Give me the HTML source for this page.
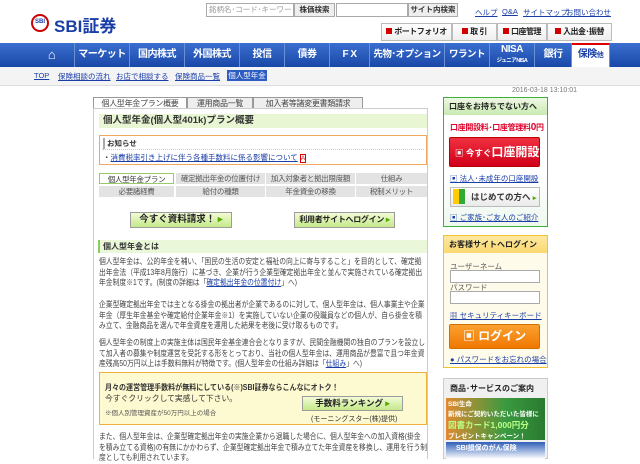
<!DOCTYPE html>
<html><head><meta charset="utf-8"><style>
*{margin:0;padding:0;box-sizing:border-box}
body{width:640px;height:459px;overflow:hidden;background:#fff;font-family:"Liberation Sans","Noto Sans CJK JP",sans-serif;font-size:9px;color:#333;position:relative}
.a{position:absolute;white-space:nowrap}
a,.lk{color:#1a3ea8;text-decoration:underline}
.nav{left:0;top:43px;width:640px;height:24px;background:linear-gradient(#3b6fcf,#1947a8);}
.nav div{position:absolute;top:0;height:24px;color:#fff;font-size:10px;font-weight:bold;text-align:center;line-height:24px;border-right:1px solid #6d8fd6;letter-spacing:-0.5px;overflow:hidden}
.hb{top:23px;height:18px;border:1px solid #bbb;background:linear-gradient(#fff,#eee);font-size:8px;font-weight:bold;line-height:16px;text-align:center;color:#222;letter-spacing:-0.5px}
.hb b{display:inline-block;width:6px;height:6px;background:#d10000;margin-right:2px}
.tab{top:97px;height:12px;border:1px solid #999;border-bottom:none;background:#eee;font-size:8px;text-align:center;line-height:11px;color:#444;letter-spacing:-0.3px}
.st{height:11px;background:#e3e3e3;font-size:7.5px;text-align:center;line-height:11px;color:#555;letter-spacing:-0.3px}
.p{left:99px;width:386px;font-size:8px;line-height:10.6px;color:#444;white-space:normal;transform:scaleX(0.85);transform-origin:0 0}
.gb{background:linear-gradient(#f2fbd6,#c5e98a);border:1px solid #9c9c9c;font-weight:bold;text-align:center;color:#222}
</style></head><body>
<!-- header -->
<div class="a" style="left:31px;top:14px;width:18px;height:18px;border-radius:50%;border:2px solid #c00;font-size:6px;color:#1a3ea8;font-weight:bold;line-height:13px;text-align:center">SBI</div>
<div class="a" style="left:54px;top:12px;font-size:17px;font-weight:bold;color:#1a3ea8">SBI証券</div>
<div class="a" style="left:206px;top:3px;width:88px;height:14px;border:1px solid #aaa;font-size:7.5px;color:#999;line-height:12px;padding-left:2px;overflow:hidden">銘柄名･コード･キーワード</div>
<div class="a" style="left:294px;top:3px;width:41px;height:14px;border:1px solid #aaa;background:#eee;font-size:7.5px;font-weight:bold;line-height:12px;text-align:center">株価検索</div>
<div class="a" style="left:336px;top:3px;width:72px;height:14px;border:1px solid #aaa"></div>
<div class="a" style="left:408px;top:3px;width:50px;height:14px;border:1px solid #aaa;background:#eee;font-size:7.5px;font-weight:bold;line-height:12px;text-align:center">サイト内検索</div>
<div class="a lk" style="left:475px;top:7px;font-size:7.5px">ヘルプ</div>
<div class="a lk" style="left:502px;top:7px;font-size:7.5px">Q&amp;A</div>
<div class="a lk" style="left:523px;top:7px;font-size:7.5px">サイトマップ</div>
<div class="a lk" style="left:566px;top:7px;font-size:7.5px">お問い合わせ</div>
<div class="a hb" style="left:381px;width:71px"><b></b>ポートフォリオ</div>
<div class="a hb" style="left:452px;width:45px"><b></b>取 引</div>
<div class="a hb" style="left:497px;width:50px"><b></b>口座管理</div>
<div class="a hb" style="left:547px;width:65px"><b></b>入出金･振替</div>
<!-- nav -->
<div class="a nav">
<div style="left:29px;width:46px;font-size:13px">⌂</div>
<div style="left:75px;width:55px">マーケット</div>
<div style="left:130px;width:55px">国内株式</div>
<div style="left:185px;width:55px">外国株式</div>
<div style="left:240px;width:45px">投信</div>
<div style="left:285px;width:45px">債券</div>
<div style="left:330px;width:40px">F X</div>
<div style="left:370px;width:75px;font-size:9.5px">先物･オプション</div>
<div style="left:445px;width:45px;font-size:9.5px">ワラント</div>
<div style="left:490px;width:45px;line-height:10px;padding-top:2px">NISA<br><span style="font-size:5.5px">ジュニアNISA</span></div>
<div style="left:535px;width:37px">銀行</div>
<div style="left:572px;width:38px;background:#fff;color:#1a3ea8;border-top:2px solid #d00;line-height:20px">保険<span style="font-size:7px">他</span></div>
</div>
<div class="a" style="left:0;top:67px;width:640px;height:19px;background:#f4f4f4;border-bottom:1px solid #ddd"></div>
<div class="a lk" style="left:34px;top:71px;font-size:7.5px">TOP</div>
<div class="a lk" style="left:58px;top:71px;font-size:7.5px">保険相談の流れ</div>
<div class="a lk" style="left:116px;top:71px;font-size:7.5px">お店で相談する</div>
<div class="a lk" style="left:175px;top:71px;font-size:7.5px">保険商品一覧</div>
<div class="a" style="left:227px;top:70px;width:40px;height:11px;background:#2d5cc2;color:#fff;font-size:7.5px;line-height:11px;text-align:center">個人型年金</div>
<div class="a" style="left:512px;top:87px;font-size:7px;color:#777">2016-03-18 13:10:01</div>
<!-- main -->
<div class="a tab" style="left:93px;width:94px;background:#fff">個人型年金プラン概要</div>
<div class="a tab" style="left:187px;width:66px">運用商品一覧</div>
<div class="a tab" style="left:253px;width:110px">加入者等諸変更書類請求</div>
<div class="a" style="left:93px;top:108px;width:335px;height:351px;border:1px solid #ccc;border-bottom:none"></div>
<div class="a" style="left:99px;top:114px;width:328px;height:14px;background:#e8f6d4;font-size:9.5px;font-weight:bold;line-height:14px;padding-left:4px;color:#333">個人型年金(個人型401k)プラン概要</div>
<div class="a" style="left:99px;top:135px;width:328px;height:30px;border:1px solid #f0a860"></div>
<div class="a" style="left:103px;top:138px;font-size:7.5px;font-weight:bold;border-left:2px solid #aaa;padding-left:2px">お知らせ</div>
<div class="a" style="left:102px;top:149px;width:322px;border-top:1px dotted #ccc"></div>
<div class="a" style="left:103px;top:152px;font-size:7.5px">・<span class="lk">消費税率引き上げに伴う各種手数料に係る影響について</span> <span style="color:#d00;border:1px solid #d00;font-size:6.5px">A</span></div>
<div class="a st" style="left:99px;top:173px;width:75px;background:#fff;border:1px solid #9c6;color:#333">個人型年金プラン</div>
<div class="a st" style="left:176px;top:173px;width:89px">確定拠出年金の位置付け</div>
<div class="a st" style="left:266px;top:173px;width:89px">加入対象者と拠出限度額</div>
<div class="a st" style="left:356px;top:173px;width:71px">仕組み</div>
<div class="a st" style="left:99px;top:186px;width:75px">必要諸経費</div>
<div class="a st" style="left:176px;top:186px;width:89px">給付の種類</div>
<div class="a st" style="left:266px;top:186px;width:89px">年金資金の移換</div>
<div class="a st" style="left:356px;top:186px;width:71px">税制メリット</div>
<div class="a gb" style="left:130px;top:212px;width:102px;height:16px;font-size:9.5px;line-height:14px">今すぐ資料請求！ <span style="color:#5a0">▸</span></div>
<div class="a gb" style="left:294px;top:212px;width:101px;height:16px;font-size:8px;line-height:14px;letter-spacing:-0.3px">利用者サイトへログイン <span style="color:#5a0">▸</span></div>
<div class="a" style="left:98px;top:240px;width:329px;height:13px;background:#eaf7d8;border-left:2px solid #8c6;font-size:8px;font-weight:bold;line-height:13px;padding-left:3px">個人型年金とは</div>
<div class="a p" style="top:257px">個人型年金は、公的年金を補い、「国民の生活の安定と福祉の向上に寄与すること」を目的として、確定拠出年金法（平成13年8月施行）に基づき、企業が行う企業型確定拠出年金と並んで実施されている確定拠出年金制度※1です。(制度の詳細は「<span class="lk">確定拠出年金の位置付け</span>」へ)</div>
<div class="a p" style="top:300px">企業型確定拠出年金では主となる掛金の拠出者が企業であるのに対して、個人型年金は、個人事業主や企業年金（厚生年金基金や確定給付企業年金※1）を実施していない企業の役職員などの個人が、自ら掛金を積み立て、金融商品を選んで年金資産を運用した結果を老後に受け取るものです。</div>
<div class="a p" style="top:338px">個人型年金の制度上の実施主体は国民年金基金連合会となりますが、民間金融機関の独自のプランを設立して加入者の募集や制度運営を受託する形をとっており、当社の個人型年金は、運用商品が豊富で且つ年金資産残高50万円以上は手数料無料が特徴です。(個人型年金の仕組み詳細は「<span class="lk">仕組み</span>」へ)</div>
<div class="a" style="left:99px;top:372px;width:328px;height:53px;background:#fdf9d0;border:1px solid #f0b040"></div>
<div class="a" style="left:105px;top:382px;font-size:7.8px;font-weight:bold;transform:scaleX(.9);transform-origin:0 0">月々の運営管理手数料が無料にしている(※)SBI証券ならこんなにオトク！</div>
<div class="a" style="left:105px;top:393px;font-size:7.8px">今すぐクリックして実感して下さい。</div>
<div class="a" style="left:105px;top:407px;font-size:6.5px;color:#555">※個人別管理資産が50万円以上の場合</div>
<div class="a gb" style="left:302px;top:396px;width:101px;height:15px;font-size:8.5px;line-height:13px">手数料ランキング <span style="color:#5a0">▸</span></div>
<div class="a" style="left:311px;top:414px;font-size:7px">(モーニングスター(株)提供)</div>
<div class="a p" style="top:432px">また、個人型年金は、企業型確定拠出年金の実施企業から退職した場合に、個人型年金への加入資格(掛金を積み立てる資格)の有無にかかわらず、企業型確定拠出年金で積み立てた年金資産を移換し、運用を行う制度としても利用されています。</div>
<!-- sidebar -->
<div class="a" style="left:443px;top:97px;width:105px;height:130px;border:1px solid #3bb03b;background:linear-gradient(#fff 60%,#eef8ee)"></div>
<div class="a" style="left:444px;top:98px;width:103px;height:17px;background:linear-gradient(#eef8e4,#c8eab0);font-size:8px;font-weight:bold;line-height:17px;padding-left:5px;color:#222">口座をお持ちでない方へ</div>
<div class="a" style="left:450px;top:122px;font-size:8px;font-weight:bold;color:#e0002a;letter-spacing:-0.3px">口座開設料･口座管理料<span style="font-size:10px">0</span>円</div>
<div class="a" style="left:449px;top:137px;width:91px;height:30px;background:linear-gradient(#f03040,#d0001a);border:1px solid #b00;border-radius:2px;color:#fff;font-weight:bold;font-size:8.5px;line-height:28px;padding-left:5px">▣ 今すぐ<span style="font-size:12px">口座開設</span></div>
<div class="a lk" style="left:450px;top:173px;font-size:7.5px">▣ 法人･未成年の口座開設</div>
<div class="a" style="left:450px;top:187px;width:90px;height:20px;border:1px solid #bbb;background:linear-gradient(#fff,#eaeaea);font-size:8.5px;font-weight:bold;line-height:18px;padding-left:20px">はじめての方へ <span style="color:#5a0;font-size:7px">▸</span></div>
<div class="a" style="left:453px;top:189px;width:12px;height:15px;background:linear-gradient(90deg,#fc0 50%,#3a3 50%)"></div>
<div class="a lk" style="left:450px;top:212px;font-size:7.5px">▣ ご家族･ご友人のご紹介</div>
<div class="a" style="left:443px;top:235px;width:105px;height:133px;border:1px solid #f5c030;background:#fffbea"></div>
<div class="a" style="left:444px;top:236px;width:103px;height:17px;background:linear-gradient(#fde9a0,#fbd870);font-size:8px;font-weight:bold;line-height:17px;padding-left:5px;color:#222">お客様サイトへログイン</div>
<div class="a" style="left:450px;top:261px;font-size:7.5px;color:#555">ユーザーネーム</div>
<div class="a" style="left:450px;top:270px;width:90px;height:13px;border:1px solid #aaa;background:#fff"></div>
<div class="a" style="left:450px;top:282px;font-size:7.5px;color:#555">パスワード</div>
<div class="a" style="left:450px;top:291px;width:90px;height:13px;border:1px solid #aaa;background:#fff"></div>
<div class="a lk" style="left:450px;top:310px;font-size:7.5px">▦ セキュリティキーボード</div>
<div class="a" style="left:449px;top:324px;width:91px;height:25px;background:linear-gradient(#fba030,#f07800);border:1px solid #d07000;border-radius:2px;color:#fff;font-weight:bold;font-size:12px;line-height:23px;text-align:center">▣ ログイン</div>
<div class="a lk" style="left:450px;top:354px;font-size:7.5px">● パスワードをお忘れの場合</div>
<div class="a" style="left:443px;top:378px;width:105px;height:81px;border:1px solid #ccc;background:#f0f0f0"></div>
<div class="a" style="left:450px;top:383px;font-size:8px;font-weight:bold;color:#222">商品･サービスのご案内</div>
<div class="a" style="left:446px;top:398px;width:99px;height:42px;background:linear-gradient(90deg,#e08a30,#3a9a40 60%,#2a7a30);color:#fff;font-size:6.5px;font-weight:bold;padding:2px 2px;line-height:10px;overflow:hidden">SBI生命<br>新規にご契約いただいた皆様に<br><span style="color:#bf8;font-size:8.5px">図書カード1,000円分</span><br>プレゼントキャンペーン！</div>
<div class="a" style="left:446px;top:442px;width:99px;height:17px;background:linear-gradient(#2f5fb8,#fff);color:#fff;font-size:7px;font-weight:bold;padding:1px 10px">SBI損保のがん保険</div>
</body></html>
